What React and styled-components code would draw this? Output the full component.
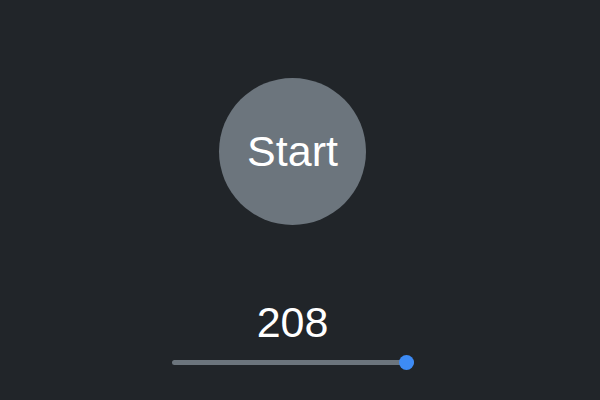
import React, { useState } from 'react';
import styled, { createGlobalStyle } from 'styled-components';

const GlobalStyle = createGlobalStyle`
  html, body {
    margin: 0;
    background-color: #212529;
    font-family: "Liberation Sans", Arial, sans-serif;
  }
`;

const Page = styled.div`
  height: 100vh;
  width: 100vw;
  display: flex;
  flex-direction: column;
  align-items: center;
  padding-top: 78px;
  padding-right: 15px;
  box-sizing: border-box;
  color: #fff;
`;

const StartButton = styled.button`
  width: 147px;
  height: 147px;
  border-radius: 50%;
  border: none;
  background-color: #6c757d;
  color: #fff;
  font-family: inherit;
  font-size: 43px;
  padding: 0;
  cursor: pointer;
`;

const Tempo = styled.div`
  margin-top: 73px;
  font-size: 43px;
  line-height: 48px;
`;

const Slider = styled.input`
  -webkit-appearance: none;
  appearance: none;
  width: 242px;
  height: 5px;
  margin: 14px 0 0;
  border-radius: 3px;
  background: #6c757d;
  outline: none;

  &::-webkit-slider-thumb {
    -webkit-appearance: none;
    appearance: none;
    width: 15px;
    height: 15px;
    border-radius: 50%;
    background: #3d8bf5;
    border: none;
    cursor: pointer;
  }
`;

export default function App() {
  const [bpm, setBpm] = useState(208);
  return (
    <>
      <GlobalStyle />
      <Page>
        <StartButton>Start</StartButton>
        <Tempo>{bpm}</Tempo>
        <Slider
          type="range"
          min={40}
          max={208}
          value={bpm}
          onChange={(e) => setBpm(Number(e.target.value))}
        />
      </Page>
    </>
  );
}
